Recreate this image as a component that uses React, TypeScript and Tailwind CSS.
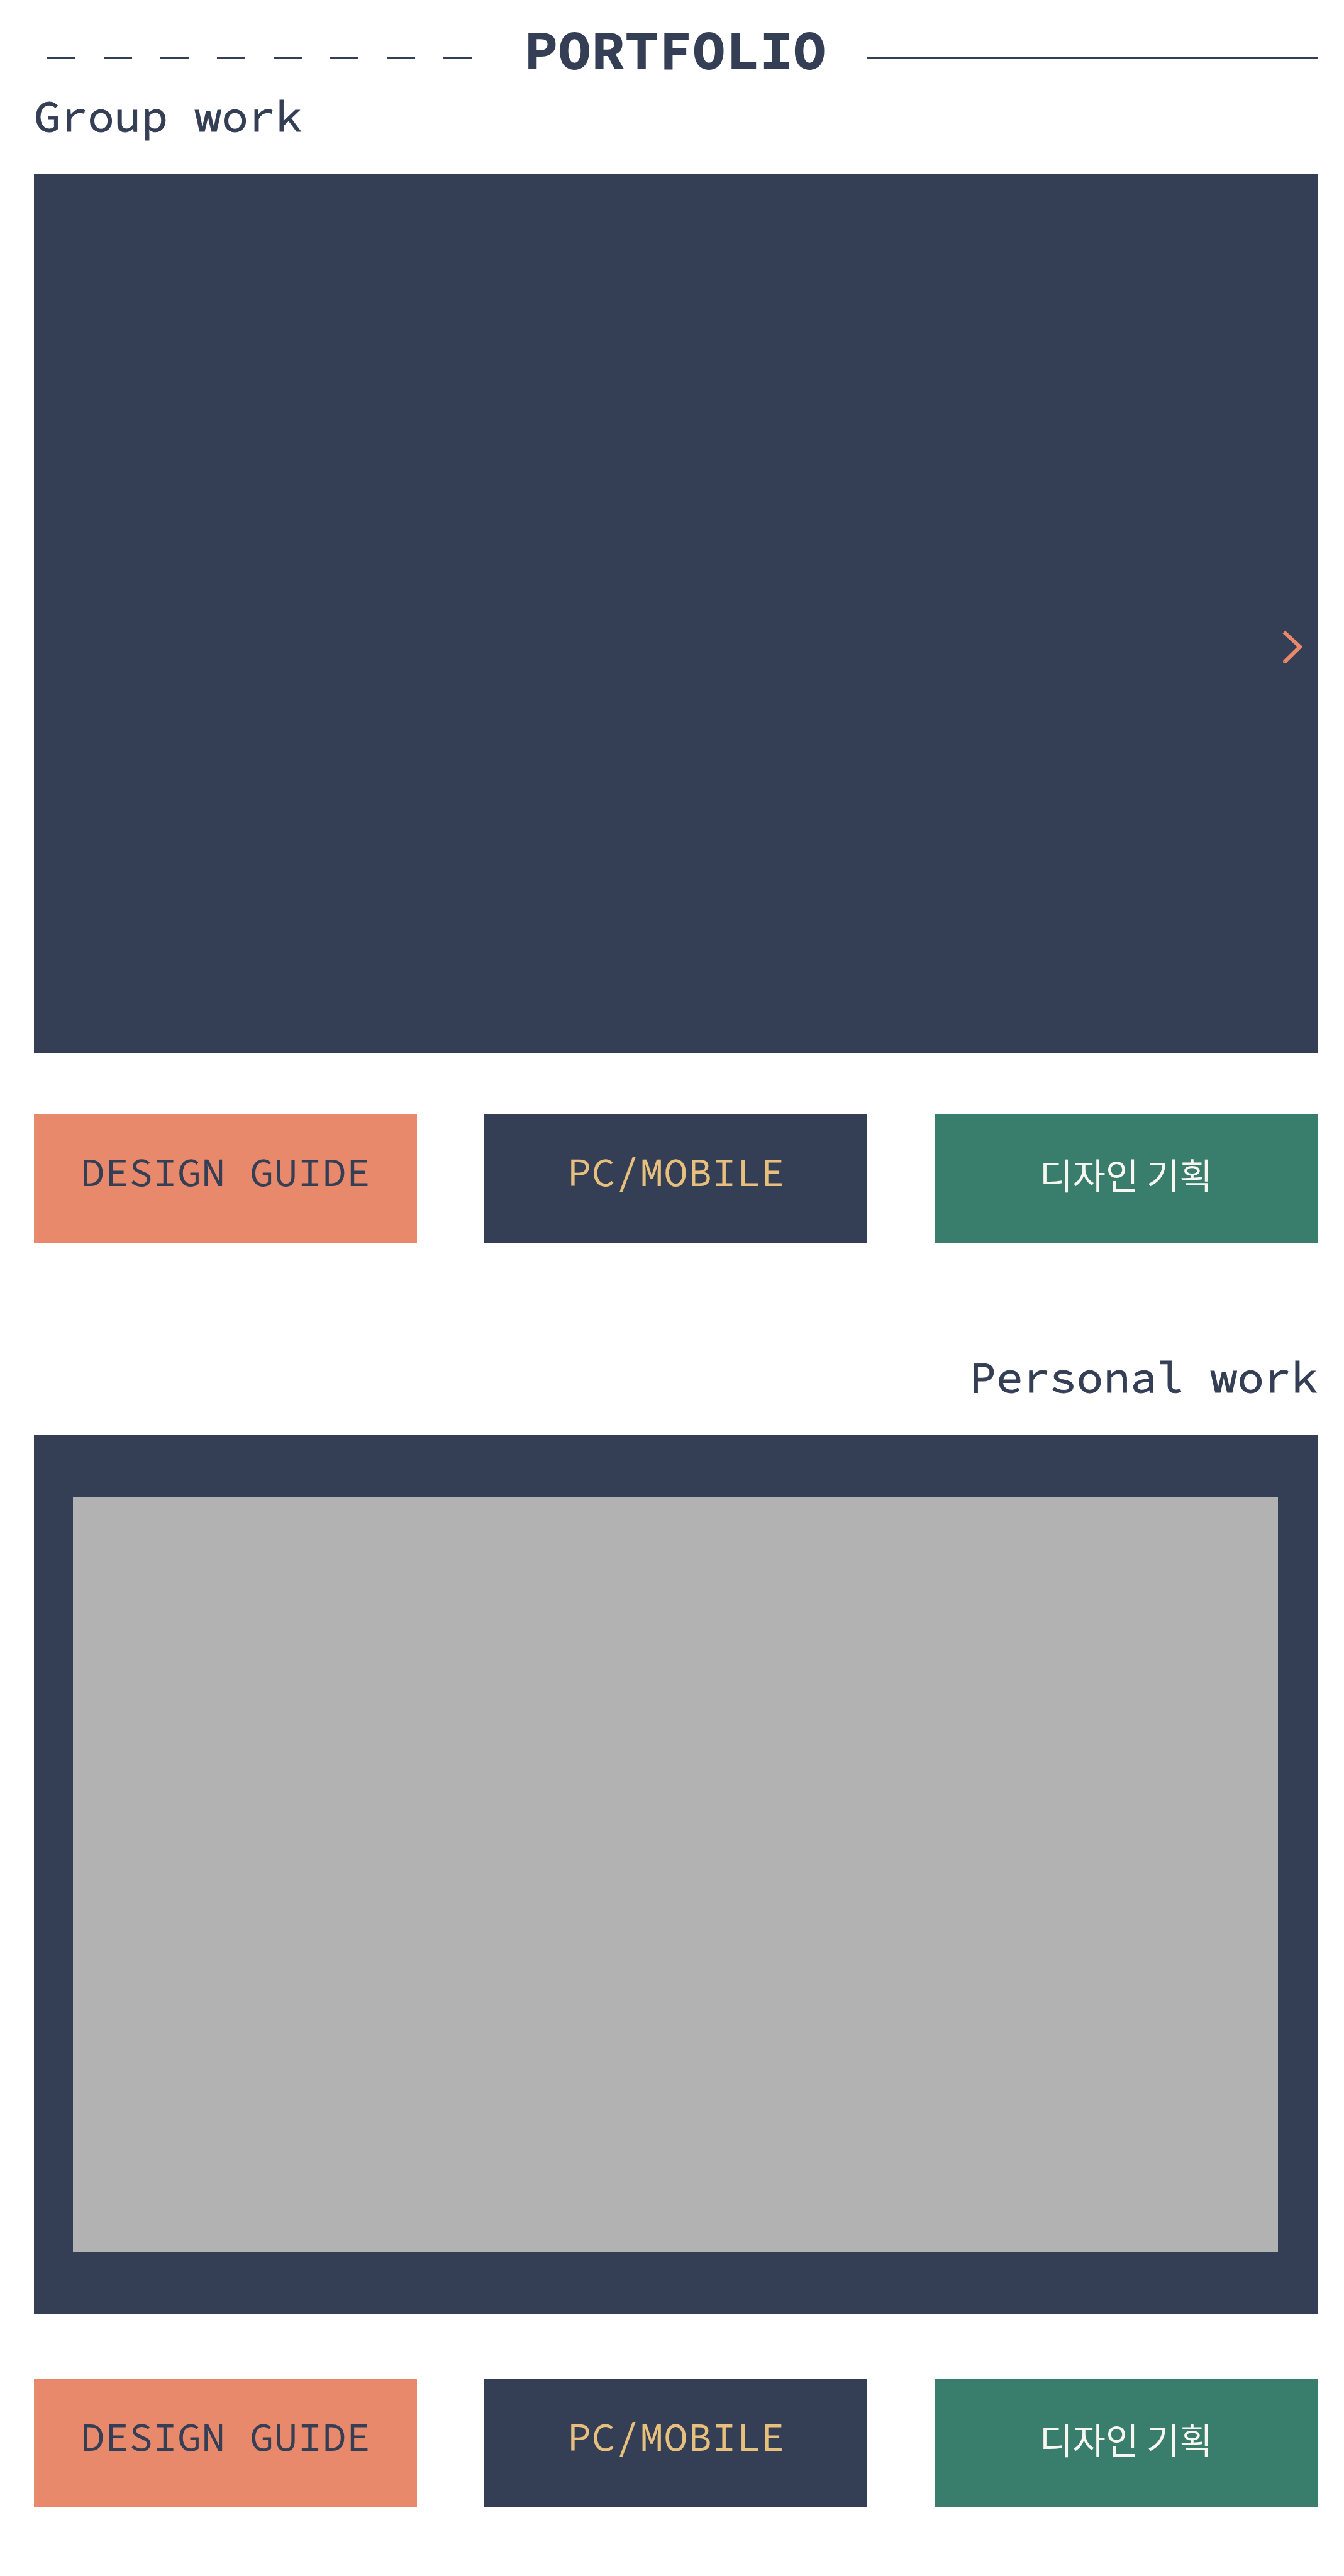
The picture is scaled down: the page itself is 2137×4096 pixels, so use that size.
const links = [
  { label: "DESIGN GUIDE", style: "bg-[#e8896b] text-[#343e55]" },
  { label: "PC/MOBILE", style: "bg-[#343e55] text-[#e8c07e]" },
];

function WorkLinks() {
  return (
    <nav className="grid grid-cols-3 gap-[107px]">
      {links.map((link) => (
        <a
          key={link.label}
          href="#"
          className={`flex h-[204px] items-center justify-center pb-[22px] text-[64px] leading-none whitespace-nowrap ${link.style}`}
        >
          {link.label}
        </a>
      ))}
      <a
        href="#"
        className="flex h-[204px] items-center justify-center bg-[#397d6d] pb-4 font-['Noto_Sans_CJK_KR',sans-serif] text-[57px] leading-none whitespace-nowrap text-[#f8f6f0]"
      >
        디자인 기획
      </a>
    </nav>
  );
}

export default function App() {
  return (
    <main className="bg-white pt-[33px] pr-[42px] pb-[109px] pl-[54px] font-['Source_Code_Pro','Liberation_Mono',monospace] text-[#343e55]">
      <header className="flex items-end">
        <div className="mb-[29px] ml-[21px] flex flex-1 justify-between" aria-hidden="true">
          {Array.from({ length: 8 }, (_, i) => (
            <span key={i} className="h-1 w-[45px] bg-[#343e55]" />
          ))}
        </div>
        <h1 className="mr-16 ml-[83px] text-[89px] leading-[90px] font-bold">PORTFOLIO</h1>
        <div className="mb-[29px] h-1 w-[717px] bg-[#343e55]" aria-hidden="true" />
      </header>

      <section className="mt-[25px]">
        <h2 className="text-[71px] leading-[72px] [-webkit-text-stroke:1px]">Group work</h2>
        <div className="relative mt-[57px] mb-[98px] aspect-[2041/1397] bg-[#343e55]">
          <button type="button" aria-label="Next" className="absolute top-[725px] right-6">
            <svg className="h-[53px] w-8" viewBox="0 0 32 53" fill="none" stroke="#e8896b" strokeWidth="6">
              <path d="M2.5 3 28 26.5 4 50" />
              <circle cx="4" cy="50" r="1" strokeWidth="4" />
            </svg>
          </button>
        </div>
        <WorkLinks />
      </section>

      <section className="mt-[177px]">
        <h2 className="text-right text-[71px] leading-[72px] [-webkit-text-stroke:1px]">Personal work</h2>
        <div className="mt-[57px] mb-[104px] flex aspect-[2041/1397] bg-[#343e55] pt-[99px] pr-[63px] pb-[98px] pl-[62px]">
          <div className="flex-1 bg-[#b2b2b2]" />
        </div>
        <WorkLinks />
      </section>
    </main>
  );
}
